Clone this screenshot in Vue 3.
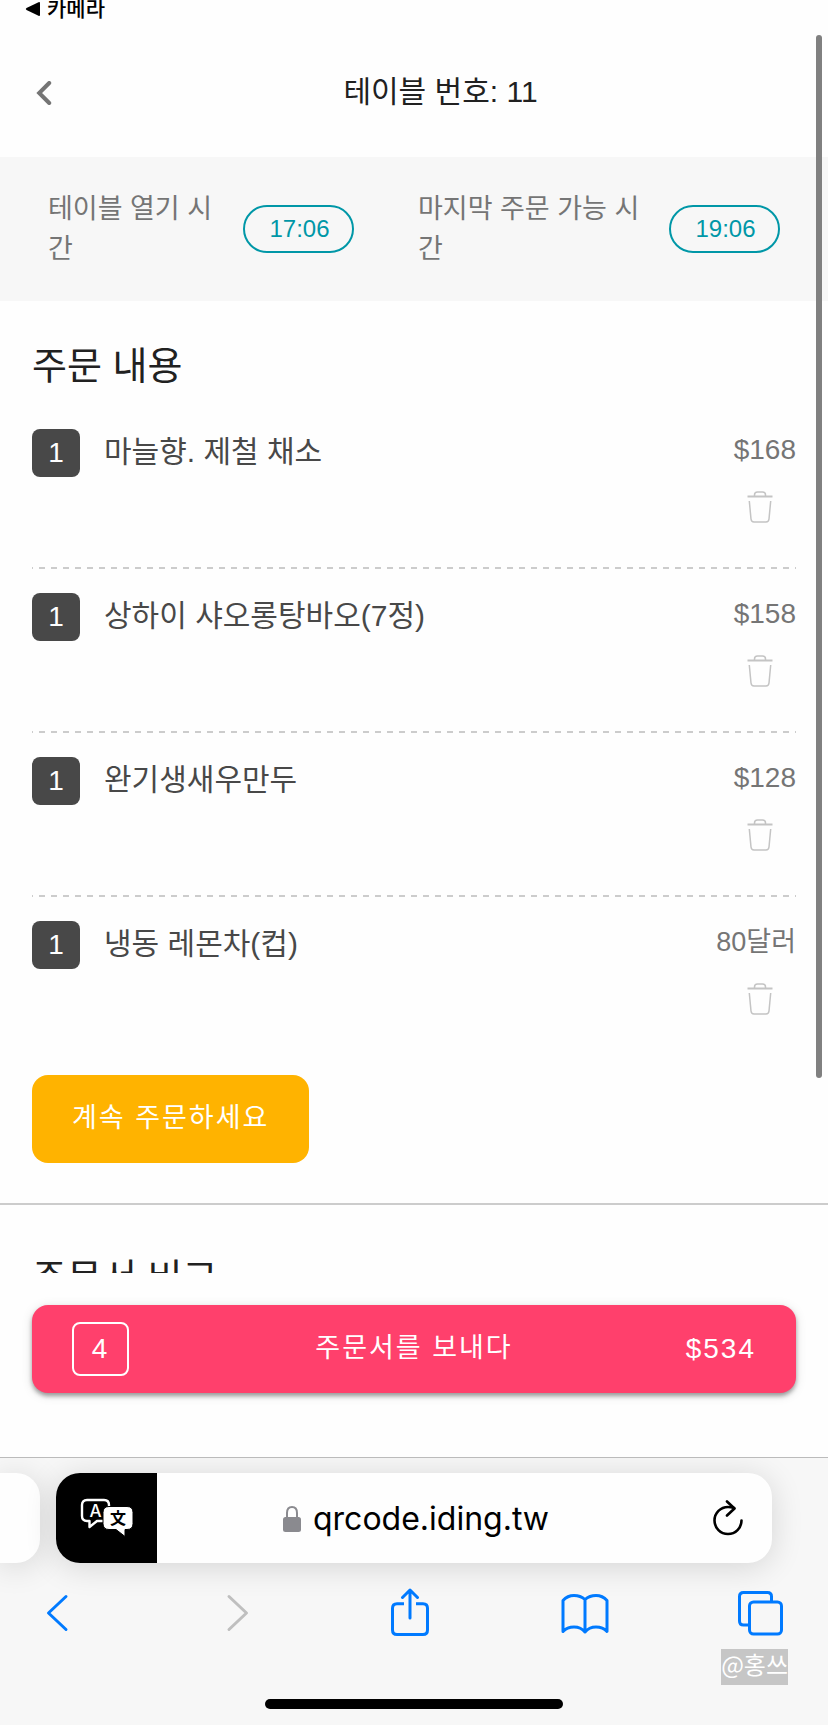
<script setup>
import { computed, ref } from 'vue'

const items = ref([
  { id: 1, qty: 1, name: '마늘향. 제철 채소', price: '$168' },
  { id: 2, qty: 1, name: '상하이 샤오롱탕바오(7정)', price: '$158' },
  { id: 3, qty: 1, name: '완기생새우만두', price: '$128' },
  { id: 4, qty: 1, name: '냉동 레몬차(컵)', price: '80달러', local: true },
])
const times = [
  { label: '테이블 열기 시간', value: '17:06' },
  { label: '마지막 주문 가능 시간', value: '19:06' },
]
const count = computed(() => items.value.reduce((n, item) => n + item.qty, 0))
</script>

<template>
  <div class="screen">
    <div class="status">
      <svg class="status-arrow" viewBox="0 0 16 16" aria-hidden="true">
        <path d="M1.5 7 13.5 1.2q1.5-.7 1.5 1v11.6q0 1.7-1.5 1L1.5 9Q0 8 1.500 7z" fill="#000" />
      </svg>
      <span>카메라</span>
    </div>

    <header class="header">
      <button class="back" type="button" aria-label="뒤로">
        <svg viewBox="0 0 16 24" aria-hidden="true">
          <path d="M13.2 2 3.200 12l10 10" fill="none" stroke="#757575" stroke-width="4" stroke-linecap="round" />
        </svg>
      </button>
      <h1>테이블 번호: 11</h1>
    </header>

    <section class="times">
      <div v-for="t in times" :key="t.label" class="time">
        <span class="time-label">{{ t.label }}</span>
        <span class="time-value">{{ t.value }}</span>
      </div>
    </section>

    <main class="content">
      <section class="order">
        <h2>주문 내용</h2>
        <ul>
          <li v-for="item in items" :key="item.id">
            <span class="qty">{{ item.qty }}</span>
            <span class="name">{{ item.name }}</span>
            <div class="side">
              <span class="price" :class="{ local: item.local }">{{ item.price }}</span>
              <button class="trash" type="button" aria-label="삭제">
                <svg viewBox="0 0 26 32" fill="none" stroke="#c4c4c4" stroke-width="1.5" aria-hidden="true">
                  <path d="M.5 5.500h25" stroke-width="2" />
                  <path d="M7.500 5V4q0-3 3-3h5q3 0 3 3v1" />
                  <path d="M2.300 10 4 28q.3 3 3 3h12q2.700 0 3-3l1.700-18" />
                </svg>
              </button>
            </div>
          </li>
        </ul>
        <button class="more" type="button">계속 주문하세요</button>
      </section>
      <section class="notes">
        <h2>주문서 비고</h2>
      </section>
    </main>

    <div class="submit-bar">
      <button class="submit" type="button">
        <span class="count">{{ count }}</span>
        <span class="submit-text">주문서를 보내다</span>
        <span class="total">$534</span>
      </button>
    </div>

    <footer class="browser">
      <div class="tabs">
        <div class="tab-prev"></div>
        <div class="address">
          <button class="translate" type="button" aria-label="번역">
            <svg viewBox="0 0 54 40" aria-hidden="true">
              <path d="M7 2h17q5 0 5 5V18q0 5-5 5h-7l-7.500 6v-6H7q-5 0-5-5V7q0-5 5-5z" fill="none" stroke="#fff" stroke-width="2.400" stroke-linejoin="round" />
              <text class="latin" x="15.500" y="18.500">A</text>
              <path d="M29 8.500h18q6 0 6 6v11q0 6-6 6h-2v7l-9-7h-7q-6 0-6-6v-11q0-6 6-6z" fill="#fff" stroke="#000" stroke-width="1" />
              <text class="han" x="38" y="26">文</text>
            </svg>
          </button>
          <div class="site">
            <svg viewBox="0 0 18 26" aria-hidden="true">
              <path d="M4 12V7q0-6 5-6t5 6v5" fill="none" stroke="#8a8a8f" stroke-width="2" />
              <rect y="11" width="18" height="15" rx="2.500" fill="#8a8a8f" />
            </svg>
            <span>qrcode.iding.tw</span>
          </div>
          <button class="reload" type="button" aria-label="새로고침">
            <svg viewBox="0 0 30 36" fill="none" stroke="#000" stroke-width="2.600" stroke-linecap="round" stroke-linejoin="round" aria-hidden="true">
              <path d="M28.500 20.500A13.500 13.500 0 1 1 15 7q3 0 6 1" />
              <path d="m14 1.500 7.500 7-7.500 7" />
            </svg>
          </button>
        </div>
      </div>

      <nav class="toolbar" aria-label="브라우저">
        <button type="button" aria-label="이전">
          <svg viewBox="0 0 48 48"><path d="M32 8.500 14.500 25 32 41.500" /></svg>
        </button>
        <button type="button" class="off" aria-label="다음">
          <svg viewBox="0 0 48 48"><path d="M19 8.500 36.500 25 19 41.500" /></svg>
        </button>
        <button type="button" aria-label="공유">
          <svg viewBox="0 0 48 48">
            <path d="M19 15.800h-7q-4.500 0-4.500 4.500V42q0 4.500 4.500 4.500h26q4.500 0 4.500-4.500V20.300q0-4.500-4.500-4.500h-7" stroke-linecap="butt" />
            <path d="M25 30V2M17.500 9.500 25 2l7.500 7.500" />
          </svg>
        </button>
        <button type="button" aria-label="책갈피">
          <svg viewBox="0 0 48 48">
            <path d="M24 11.500Q19.500 7.500 13 7.500T2 12.500v31Q6 39 13 39t11 5q4-5 11-5t11 4.500v-31Q41.500 7.500 35 7.500T24 11.500zV44" />
          </svg>
        </button>
        <button type="button" aria-label="탭">
          <svg viewBox="0 0 48 48">
            <path d="M35.500 13V8.500q0-4-4-4h-24q-4 0-4 4V33q0 4 4 4H12" stroke-linecap="butt" />
            <rect x="13.500" y="14" width="32" height="32" rx="4" />
          </svg>
        </button>
      </nav>
      <span class="watermark">@홍쓰</span>
      <div class="home"></div>
    </footer>

    <div class="scrollbar"></div>
  </div>
</template>

<style>
body {
  margin: 0;
  background: #fefefe;
}
</style>

<style scoped>
* {
  box-sizing: border-box;
}
.screen {
  position: relative;
  display: flex;
  flex-direction: column;
  height: 100vh;
  overflow: hidden;
  background: #fefefe;
  color: #212121;
  font-family: "Liberation Sans", "Noto Sans CJK KR", sans-serif;
}
button {
  margin: 0;
  padding: 0;
  border: 0;
  background: none;
  color: inherit;
  font: inherit;
  cursor: pointer;
}
svg {
  display: block;
}
h1,
h2,
ul {
  margin: 0;
  padding: 0;
  font-weight: 400;
  list-style: none;
}
.status {
  display: flex;
  gap: 6px;
  flex: none;
  height: 26px;
  padding-left: 25px;
  color: #000;
  font-size: 21px;
  font-weight: 500;
  line-height: 18px;
}
.status-arrow {
  width: 16px;
  height: 16px;
  margin-top: 1px;
}
.header {
  display: flex;
  align-items: center;
  flex: none;
  height: 131px;
}
.back {
  width: 53px;
  padding: 14px 0 12px 36px;
}
.back svg {
  width: 16px;
  height: 24px;
}
.header h1 {
  flex: 1;
  font-size: 30px;
  line-height: 40px;
  text-align: center;
}
.times {
  display: grid;
  grid-template-columns: 306fr 362fr;
  gap: 64px;
  flex: none;
  padding: 32px 48px;
  background: #f7f7f7;
}
.time {
  display: flex;
  align-items: center;
  gap: 24px;
}
.time-label {
  flex: 1;
  color: #757575;
  font-size: 27px;
  line-height: 40px;
  word-break: break-all;
}
.time-value {
  width: 111px;
  height: 48px;
  padding-left: 2px;
  border: 2px solid #0097a7;
  border-radius: 24px;
  color: #0097a7;
  font-size: 24px;
  line-height: 44px;
  text-align: center;
}
.content {
  flex: 1;
  min-height: 0;
  overflow: hidden;
}
.order {
  padding: 32px 32px 40px;
  border-bottom: 2px solid #ccc;
}
h2 {
  font-size: 38px;
  line-height: 66px;
}
.order h2 {
  margin-bottom: 6px;
}
.order li {
  display: flex;
  align-items: flex-start;
  height: 164px;
  padding-top: 24px;
  background: repeating-linear-gradient(to right, #ccc 0 1px, transparent 1px 7px, #ccc 7px 12px) bottom / 100% 2px no-repeat;
}
.order li:last-child {
  height: 178px;
  background: none;
}
.qty {
  width: 48px;
  height: 48px;
  border-radius: 8px;
  background: #484848;
  color: #fff;
  font-size: 28px;
  line-height: 48px;
  text-align: center;
}
.name {
  flex: 1;
  margin-left: 24px;
  color: #484848;
  font-size: 30px;
  line-height: 46px;
}
.side {
  display: flex;
  flex-direction: column;
  align-items: flex-end;
  gap: 20px;
}
.price {
  color: #757575;
  font-size: 28px;
  line-height: 42px;
}
.price.local {
  font-size: 27px;
}
.trash {
  margin-right: 23px;
}
.trash svg {
  width: 26px;
  height: 32px;
}
.more {
  display: block;
  height: 88px;
  padding: 0 40px 8px;
  border-radius: 16px;
  background: #ffb300;
  color: #fff;
  font-size: 27px;
  letter-spacing: 2px;
}
.notes {
  padding: 40px 32px;
}
.submit-bar {
  flex: none;
  padding: 32px 32px 64px;
  background: #fefefe;
}
.submit {
  display: grid;
  grid-template-columns: 1fr auto 1fr;
  align-items: center;
  width: 100%;
  height: 88px;
  padding: 0 40px;
  border-radius: 16px;
  background: #ff406c;
  box-shadow: 0 3px 4px rgba(0, 0, 0, 0.35), 0 2px 12px rgba(0, 0, 0, 0.12);
  color: #fff;
  font-size: 27px;
  letter-spacing: 2px;
}
.submit-text {
  padding-bottom: 8px;
}
.count {
  width: 57px;
  height: 54px;
  border: 2px solid #fff;
  border-radius: 8px;
  font-size: 28px;
  line-height: 50px;
}
.total {
  font-size: 28px;
  text-align: right;
}
.browser {
  position: relative;
  flex: none;
  overflow: hidden;
  padding-bottom: 16px;
  border-top: 1px solid #bbb;
  background: #f7f7f7;
}
.tabs {
  display: flex;
  gap: 16px;
  padding: 15px 56px 25px 0;
}
.tab-prev {
  width: 40px;
  height: 90px;
  border-radius: 0 24px 24px 0;
  background: #fefefe;
  box-shadow: 0 4px 32px rgba(0, 0, 0, 0.14);
}
.address {
  display: flex;
  align-items: center;
  flex: 1;
  height: 90px;
  overflow: hidden;
  border-radius: 24px;
  background: #fefefe;
  box-shadow: 0 4px 32px rgba(0, 0, 0, 0.14);
}
.translate {
  display: grid;
  place-items: center;
  width: 101px;
  height: 90px;
  background: #000;
}
.translate svg {
  width: 54px;
  height: 40px;
}
.translate text {
  text-anchor: middle;
}
.latin {
  fill: #fff;
  font-family: Inter, sans-serif;
  font-size: 17px;
  font-weight: 500;
}
.han {
  fill: #000;
  font-family: "Noto Sans CJK KR", sans-serif;
  font-size: 16px;
  font-weight: 700;
}
.site {
  display: flex;
  align-items: center;
  justify-content: center;
  gap: 12px;
  flex: 1;
  padding: 2px 38px 0 0;
  color: #000;
  font-family: Inter, sans-serif;
  font-size: 32px;
  line-height: 40px;
}
.site svg {
  width: 18px;
  height: 26px;
}
.reload {
  margin-right: 29px;
}
.reload svg {
  width: 30px;
  height: 36px;
}
.toolbar {
  display: flex;
  justify-content: space-between;
  padding: 0 44px 0 34px;
}
.toolbar svg {
  width: 48px;
  height: 48px;
  fill: none;
  stroke: #007aff;
  stroke-width: 3;
  stroke-linecap: round;
  stroke-linejoin: round;
}
.toolbar .off svg {
  stroke: #bfbfbf;
}
.watermark {
  position: absolute;
  right: 40px;
  bottom: 40px;
  padding-bottom: 6px;
  background: #c6c6c6;
  color: #fff;
  font-family: "Noto Sans CJK KR", sans-serif;
  font-size: 24px;
  line-height: 30px;
}
.home {
  width: 36%;
  height: 10px;
  margin: 63px auto 0;
  border-radius: 5px;
  background: #000;
}
.scrollbar {
  position: absolute;
  top: 35px;
  right: 6px;
  width: 6px;
  height: 1043px;
  border-radius: 3px;
  background: #808080;
}
</style>
